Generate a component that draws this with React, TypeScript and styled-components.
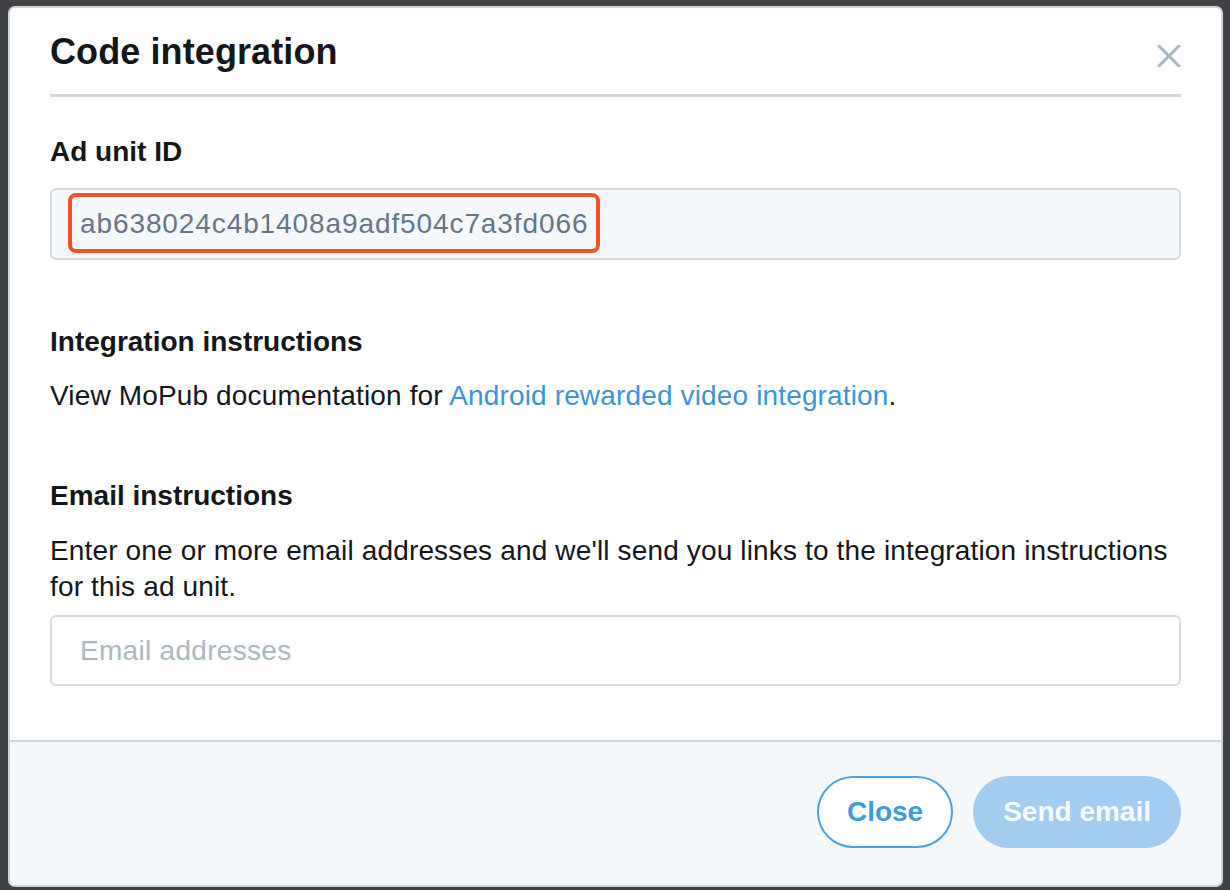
import styled, { createGlobalStyle } from 'styled-components'

const GlobalStyle = createGlobalStyle`
  html, body {
    margin: 0;
    padding: 0;
    background: #404246;
  }
  body {
    font-family: "Liberation Sans", Arial, Helvetica, sans-serif;
    -webkit-font-smoothing: antialiased;
  }
`

const Backdrop = styled.div`
  width: 1230px;
  height: 890px;
  box-sizing: border-box;
  padding: 6px 7px 0 8px;
  background: #404246;
  overflow: hidden;
`

const Modal = styled.div`
  display: flex;
  flex-direction: column;
  background: #ffffff;
  border: 2px solid #cdd5db;
  border-radius: 7px;
  overflow: hidden;
`

const Header = styled.div`
  display: flex;
  align-items: flex-start;
  justify-content: space-between;
  margin: 0 40px 0 40px;
  padding: 22px 0 21px;
  border-bottom: 3px solid #d1d7dc;
`

const Title = styled.h1`
  margin: 0;
  font-size: 36px;
  line-height: 43px;
  font-weight: 700;
  color: #14171a;
  letter-spacing: 0.1px;
`

const CloseIcon = styled.button`
  display: flex;
  margin-top: 15px;
  padding: 0;
  border: 0;
  background: none;
  cursor: pointer;
`

const Body = styled.div`
  display: flex;
  flex-direction: column;
  padding: 38px 40px 54px;
`

const Label = styled.h2<{ $top?: number }>`
  margin: ${(p) => p.$top ?? 0}px 0 0;
  font-size: 28px;
  line-height: 34px;
  font-weight: 700;
  color: #14171a;
`

const Text = styled.p<{ $top?: number }>`
  margin: ${(p) => p.$top ?? 0}px 0 0;
  font-size: 28px;
  line-height: 36px;
  color: #14171a;
  letter-spacing: 0.15px;
`

const Link = styled.a`
  color: #3b94d9;
  text-decoration: none;
`

const Field = styled.div<{ $top?: number; $readOnly?: boolean }>`
  display: flex;
  align-items: center;
  box-sizing: border-box;
  height: ${(p) => (p.$readOnly ? 72 : 71)}px;
  margin-top: ${(p) => p.$top ?? 0}px;
  padding: 0 28px;
  border: 2px solid #d4dbe0;
  border-radius: 6px;
  background: ${(p) => (p.$readOnly ? '#f5f8fa' : '#ffffff')};
  font-size: 28px;
  letter-spacing: ${(p) => (p.$readOnly ? 0.9 : 0.3)}px;
  color: ${(p) => (p.$readOnly ? '#657786' : '#aab8c2')};
`

const Highlight = styled.span`
  position: relative;
  &::after {
    content: '';
    position: absolute;
    left: -12px;
    right: -12px;
    top: -15px;
    bottom: -13px;
    border: 4px solid #f0502a;
    border-radius: 8px;
  }
`

const Footer = styled.div`
  display: flex;
  justify-content: flex-end;
  gap: 20px;
  padding: 34px 40px 37px;
  background: #f5f8fa;
  border-top: 2px solid #ccd6dd;
`

const Button = styled.button<{ $primary?: boolean }>`
  height: 72px;
  padding: 0 28px;
  border-radius: 36px;
  border: 2px solid ${(p) => (p.$primary ? '#a2cdf1' : '#4aa2ea')};
  background: ${(p) => (p.$primary ? '#a2cdf1' : '#ffffff')};
  color: ${(p) => (p.$primary ? '#f7fbfe' : '#3d9be0')};
  font-family: inherit;
  font-size: 28px;
  font-weight: 700;
  cursor: pointer;
`

export default function App() {
  return (
    <>
      <GlobalStyle />
      <Backdrop>
        <Modal>
          <Header>
            <Title>Code integration</Title>
            <CloseIcon aria-label="Close">
              <svg width="24" height="22" viewBox="0 0 24 22">
                <path
                  d="M2 1 L22 21 M22 1 L2 21"
                  stroke="#aab8c2"
                  strokeWidth="3"
                  strokeLinecap="round"
                />
              </svg>
            </CloseIcon>
          </Header>
          <Body>
            <Label>Ad unit ID</Label>
            <Field $readOnly $top={19}>
              <Highlight>ab638024c4b1408a9adf504c7a3fd066</Highlight>
            </Field>

            <Label $top={65}>Integration instructions</Label>
            <Text $top={19}>
              View MoPub documentation for{' '}
              <Link href="#">Android rewarded video integration</Link>.
            </Text>

            <Label $top={65}>Email instructions</Label>
            <Text $top={20}>
              Enter one or more email addresses and we'll send you links to the
              integration instructions for this ad unit.
            </Text>
            <Field $top={10}>Email addresses</Field>
          </Body>
          <Footer>
            <Button>Close</Button>
            <Button $primary>Send email</Button>
          </Footer>
        </Modal>
      </Backdrop>
    </>
  )
}
